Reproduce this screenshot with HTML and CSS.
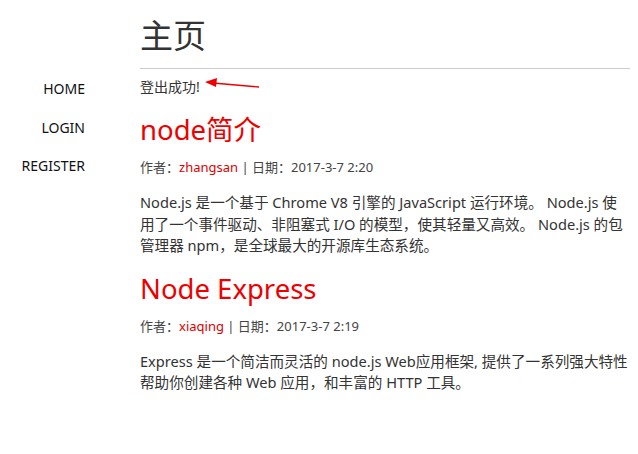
FILE: index.html
```html
<!DOCTYPE html>
<html lang="zh">
<head>
<meta charset="utf-8">
<title>主页</title>
<link rel="stylesheet" href="styles.css">
</head>
<body>
<div class="page">
  <nav class="sidebar">
    <a class="nav-link" href="#">HOME</a>
    <a class="nav-link" href="#">LOGIN</a>
    <a class="nav-link" href="#">REGISTER</a>
  </nav>
  <main class="main">
    <header class="page-header">
      <h1 class="page-title">主页</h1>
    </header>
    <p class="flash">登出成功!</p>
    <article class="post">
      <h2 class="post-title">node简介</h2>
      <p class="post-meta">作者：<a class="author" href="#">zhangsan</a> | 日期：2017-3-7 2:20</p>
      <p class="post-body">Node.js 是一个基于 Chrome V8 引擎的 JavaScript 运行环境。 Node.js 使用了一个事件驱动、非阻塞式 I/O 的模型，使其轻量又高效。 Node.js 的包管理器 npm，是全球最大的开源库生态系统。</p>
    </article>
    <article class="post">
      <h2 class="post-title">Node Express</h2>
      <p class="post-meta">作者：<a class="author" href="#">xiaqing</a> | 日期：2017-3-7 2:19</p>
      <p class="post-body">Express 是一个简洁而灵活的 node.js Web应用框架, 提供了一系列强大特性帮助你创建各种 Web 应用，和丰富的 HTTP 工具。</p>
    </article>
  </main>
  <svg class="arrow" width="60" height="14" viewBox="0 0 60 14">
    <line x1="10" y1="6" x2="56" y2="10" stroke="#e00" stroke-width="1.3"/>
    <polygon points="2,5 14,1 13,10" fill="#e00"/>
  </svg>
</div>
</body>
</html>
```
FILE: styles.css
```css
html, body {
  margin: 0;
  padding: 0;
  background: #fff;
}
body {
  font-family: "Noto Sans", "Noto Sans CJK SC", sans-serif;
  color: #333;
  font-size: 14px;
}
.page {
  display: flex;
  position: relative;
}
.sidebar {
  width: 85px;
  padding-top: 79px;
  display: flex;
  flex-direction: column;
  align-items: flex-end;
  gap: 18.5px;
}
.nav-link {
  display: block;
  line-height: 20px;
  color: #111;
  text-decoration: none;
  font-size: 14px;
}
.main {
  margin-left: 55px;
  width: 490px;
}
.page-header {
  border-bottom: 1px solid #ccc;
  padding-bottom: 12px;
  margin-top: 16px;
}
.page-title {
  margin: 0;
  font-size: 33px;
  font-weight: normal;
  line-height: 40px;
  color: #333;
}
.flash {
  margin: 8px 0 0;
  line-height: 20px;
}
.post-title {
  margin: 16px 0 0;
  font-size: 27.5px;
  font-weight: normal;
  line-height: 34px;
  color: #e00;
}
.post + .post .post-title {
  margin-top: 15px;
}
.post-meta {
  margin: 10px 0 0;
  font-family: "Noto Sans", "Noto Sans CJK TC", sans-serif;
  font-size: 13px;
  line-height: 20px;
  color: #444;
}
.author {
  color: #d00;
  text-decoration: none;
}
.post-body {
  margin: 15px 0 0;
  font-size: 14.6px;
  line-height: 21.5px;
}
.arrow {
  position: absolute;
  left: 203px;
  top: 77px;
}
```
